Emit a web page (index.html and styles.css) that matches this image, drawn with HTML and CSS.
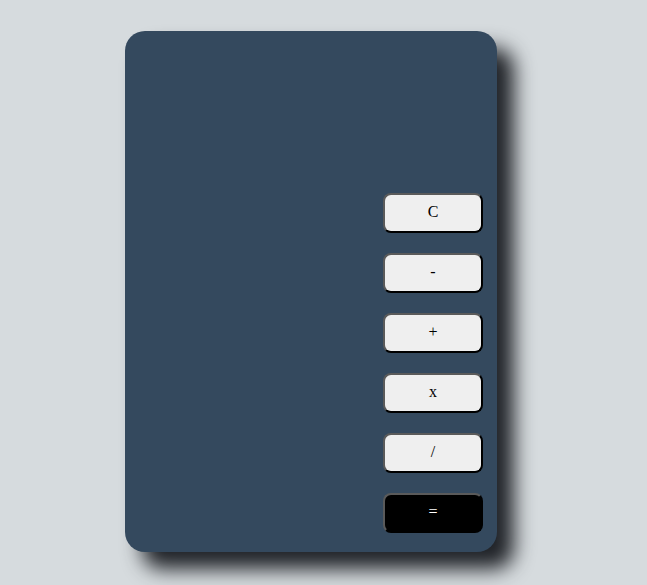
FILE: index.html
```html
<!DOCTYPE html>
<html>
<head>
<meta charset="utf-8">
<link rel="stylesheet" href="styles.css">
</head>
<body>
<div class="page">
  <div class="calculator">
    <div class="keys">
      <button class="key">C</button>
      <button class="key">-</button>
      <button class="key">+</button>
      <button class="key">x</button>
      <button class="key">/</button>
      <button class="key key-equals">=</button>
    </div>
  </div>
</div>
</body>
</html>
```
FILE: styles.css
```css
html, body {
  margin: 0;
  padding: 0;
  background: #d6dbde;
  height: 100%;
}
.page {
  padding: 31px 0 0 125px;
}
.calculator {
  width: 372px;
  height: 521px;
  box-sizing: border-box;
  background: #34495e;
  border-radius: 20px;
  box-shadow: 17px 17px 20px #202328;
  display: flex;
  flex-direction: column;
  justify-content: flex-end;
  align-items: flex-end;
  padding: 0 14px 19px 0;
}
.keys {
  display: flex;
  flex-direction: column;
  gap: 20px;
}
.key {
  width: 100px;
  height: 40px;
  box-sizing: border-box;
  border-radius: 8px;
  border: 2px solid;
  border-color: #5a5a5a #000 #000 #5a5a5a;
  background: #efefef;
  color: #000;
  font-family: "Liberation Serif", serif;
  font-size: 16px;
  padding: 0 0 2px 0;
  margin: 0;
}
.key-equals {
  background: #000;
  color: #fff;
}
```
